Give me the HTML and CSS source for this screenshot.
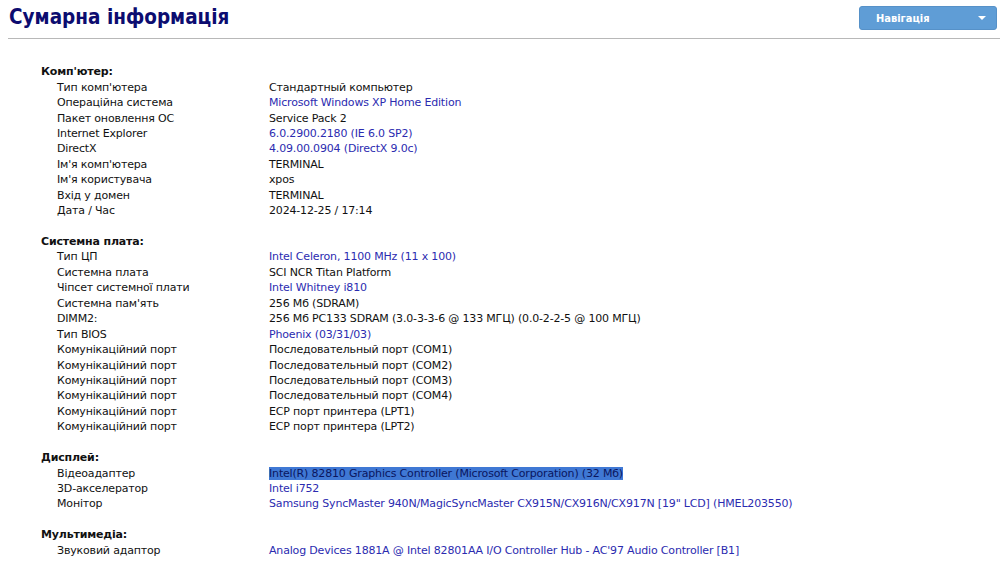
FILE: index.html
```html
<!DOCTYPE html>
<html lang="uk">
<head>
  <meta charset="UTF-8">
  <title>Сумарна інформація</title>
  <link rel="stylesheet" href="styles.css">
</head>
<body>
  <header class="top">
    <h1>Сумарна інформація</h1>
    <button class="nav-btn" type="button">Навігація <span class="caret"></span></button>
  </header>

  <table class="summary">
    <!-- Computer -->
    <tr><td class="group" colspan="2">Комп'ютер:</td></tr>
    <tr><td class="label">Тип комп'ютера</td><td>Стандартный компьютер</td></tr>
    <tr><td class="label">Операційна система</td><td><a>Microsoft Windows XP Home Edition</a></td></tr>
    <tr><td class="label">Пакет оновлення ОС</td><td>Service Pack 2</td></tr>
    <tr><td class="label">Internet Explorer</td><td><a>6.0.2900.2180 (IE 6.0 SP2)</a></td></tr>
    <tr><td class="label">DirectX</td><td><a>4.09.00.0904 (DirectX 9.0c)</a></td></tr>
    <tr><td class="label">Ім'я комп'ютера</td><td>TERMINAL</td></tr>
    <tr><td class="label">Ім'я користувача</td><td>xpos</td></tr>
    <tr><td class="label">Вхід у домен</td><td>TERMINAL</td></tr>
    <tr><td class="label">Дата / Час</td><td>2024-12-25 / 17:14</td></tr>
    <tr><td colspan="2">&nbsp;</td></tr>

    <!-- Motherboard -->
    <tr><td class="group" colspan="2">Системна плата:</td></tr>
    <tr><td class="label">Тип ЦП</td><td><a>Intel Celeron, 1100 MHz (11 x 100)</a></td></tr>
    <tr><td class="label">Системна плата</td><td>SCI NCR Titan Platform</td></tr>
    <tr><td class="label">Чіпсет системної плати</td><td><a>Intel Whitney i810</a></td></tr>
    <tr><td class="label">Системна пам'ять</td><td>256 Мб (SDRAM)</td></tr>
    <tr><td class="label">DIMM2:</td><td>256 Мб PC133 SDRAM (3.0-3-3-6 @ 133 МГЦ) (0.0-2-2-5 @ 100 МГЦ)</td></tr>
    <tr><td class="label">Тип BIOS</td><td><a>Phoenix (03/31/03)</a></td></tr>
    <tr><td class="label">Комунікаційний порт</td><td>Последовательный порт (COM1)</td></tr>
    <tr><td class="label">Комунікаційний порт</td><td>Последовательный порт (COM2)</td></tr>
    <tr><td class="label">Комунікаційний порт</td><td>Последовательный порт (COM3)</td></tr>
    <tr><td class="label">Комунікаційний порт</td><td>Последовательный порт (COM4)</td></tr>
    <tr><td class="label">Комунікаційний порт</td><td>ECP порт принтера (LPT1)</td></tr>
    <tr><td class="label">Комунікаційний порт</td><td>ECP порт принтера (LPT2)</td></tr>
    <tr><td colspan="2">&nbsp;</td></tr>

    <!-- Display -->
    <tr><td class="group" colspan="2">Дисплей:</td></tr>
    <tr><td class="label">Відеоадаптер</td><td><a class="selected">Intel(R) 82810 Graphics Controller (Microsoft Corporation) (32 Мб)</a></td></tr>
    <tr><td class="label">3D-акселератор</td><td><a>Intel i752</a></td></tr>
    <tr><td class="label">Монітор</td><td><a>Samsung SyncMaster 940N/MagicSyncMaster CX915N/CX916N/CX917N [19" LCD] (HMEL203550)</a></td></tr>
    <tr><td colspan="2">&nbsp;</td></tr>

    <!-- Multimedia -->
    <tr><td class="group" colspan="2">Мультимедіа:</td></tr>
    <tr><td class="label">Звуковий адаптор</td><td><a>Analog Devices 1881A @ Intel 82801AA I/O Controller Hub - AC'97 Audio Controller [B1]</a></td></tr>
  </table>
</body>
</html>
```

FILE: styles.css
```css
/* Page */
* { box-sizing: border-box; }
body { margin: 0 0 0 8px; font-family: "DejaVu Sans", Verdana, sans-serif; font-size: 11px; color: #111; background: #fff; overflow: hidden; }

/* Title bar */
.top { display: flex; justify-content: space-between; align-items: flex-start; border-bottom: 1px solid #b8b8b8; height: 39px; }
.top h1 { margin: 5px 0 0 1px; font-family: "DejaVu Sans Condensed", "DejaVu Sans", sans-serif; font-size: 20.5px; font-weight: bold; color: #0c0c70; }
.nav-btn { margin: 6px 3px 0 0; width: 138px; height: 24px; display: flex; align-items: center; justify-content: space-between; padding: 0 10px 0 16px; background: #5f9dd6; border: 1px solid #5691c8; border-radius: 3px; color: #fff; font-family: "DejaVu Sans Condensed", "DejaVu Sans", sans-serif; font-size: 11px; font-weight: bold; }
.caret { width: 0; height: 0; border-left: 4px solid transparent; border-right: 4px solid transparent; border-top: 4px solid #fff; }

/* Summary table */
.summary { margin: 25px 0 0 33px; border-collapse: collapse; letter-spacing: -0.17px; }
.summary td { padding: 0; height: 15.45px; line-height: 15px; white-space: nowrap; }
.summary td.group { font-weight: bold; }
.summary td.label { padding-left: 16px; width: 228px; }
.summary a { color: #2b2bb0; }
.summary a.selected { background: #3f78d4; color: #0a1660; }
```
